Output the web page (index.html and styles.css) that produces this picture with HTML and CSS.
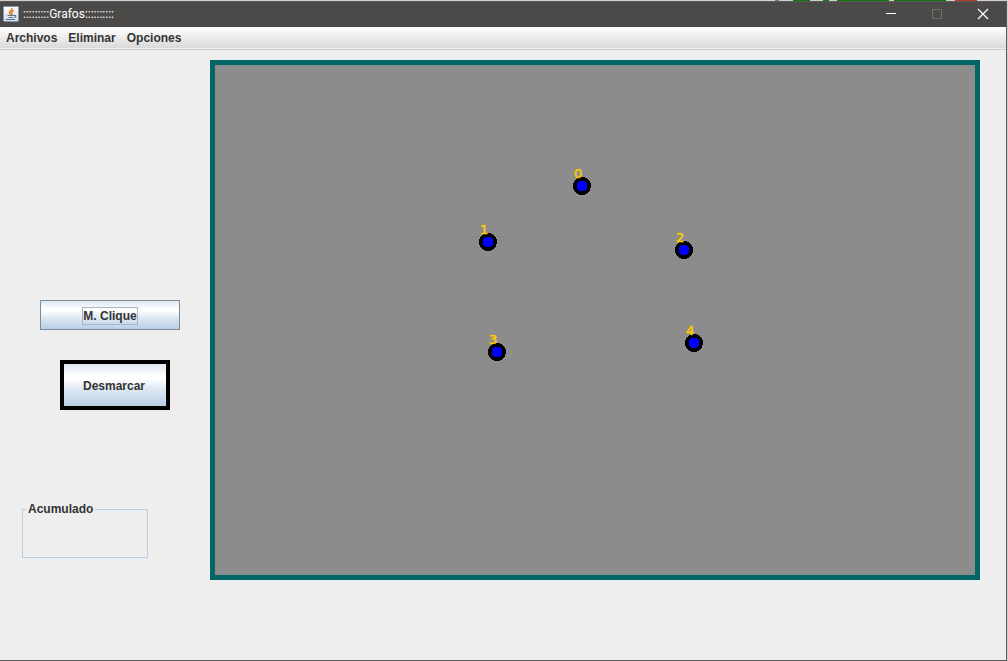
FILE: index.html
```html
<!DOCTYPE html>
<html lang="es">
<head>
<meta charset="utf-8">
<title>Grafos</title>
<link rel="stylesheet" href="styles.css">
</head>
<body>
<div class="desktop" aria-hidden="true">
  <i class="speck gray"></i><i class="speck green"></i><i class="speck green small"></i><i class="speck green long"></i><i class="speck green long"></i><i class="speck red"></i>
</div>
<div class="window">
  <header class="titlebar">
    <svg class="app-icon" viewBox="0 0 16 16" aria-hidden="true">
      <defs><linearGradient id="paper" x1="0" y1="0" x2="0" y2="1"><stop offset="0" stop-color="#fff"/><stop offset="1" stop-color="#cfd8e0"/></linearGradient></defs>
      <rect x=".5" y=".5" width="15" height="15" rx="1" fill="url(#paper)" stroke="#8299b3"/>
      <path d="M9 2C10 4 5.500 5 6.500 7L8 9M11 4.500C8 5.500 8 6.500 9 7.500L8.500 9" fill="none" stroke="#e8811c" stroke-width="1.500"/>
      <path d="M4.500 9.500H11M11 9.500C13.500 9 13.500 11 11 11.500M5.500 11.500H10M3 13.500H12" fill="none" stroke="#4e7896" stroke-width="1.100"/>
    </svg>
    <span class="title">:::::::::Grafos::::::::::</span>
    <div class="controls">
      <button class="control" aria-label="Minimizar"><svg viewBox="0 0 10 10"><path d="M0 4.500H10" stroke="#fff" fill="none"/></svg></button>
      <button class="control" aria-label="Maximizar" disabled><svg viewBox="0 0 10 10"><rect x=".5" y=".5" width="9" height="9" stroke="#716f6c" fill="none"/></svg></button>
      <button class="control" aria-label="Cerrar"><svg viewBox="0 0 10 10"><path d="M0 0L10 10M10 0L0 10" stroke="#fff" stroke-width="1.200" fill="none"/></svg></button>
    </div>
  </header>
  <nav class="menubar">
    <button class="menu">Archivos</button>
    <button class="menu">Eliminar</button>
    <button class="menu">Opciones</button>
  </nav>
  <main class="content">
    <aside class="sidebar">
      <button class="button clique"><span class="focus">M. Clique</span></button>
      <button class="button desmarcar">Desmarcar</button>
      <fieldset class="acumulado"><legend>Acumulado</legend></fieldset>
    </aside>
    <section class="graph" aria-label="Grafo">
      <svg class="plane">
        <defs><g id="node"><circle r="9" fill="#000"/><circle r="5.500" fill="#00f"/></g></defs>
        <g shape-rendering="crispEdges">
          <use href="#node" x="367" y="121"/>
          <use href="#node" x="273" y="177"/>
          <use href="#node" x="469" y="185"/>
          <use href="#node" x="282" y="287"/>
          <use href="#node" x="479" y="278"/>
        </g>
        <g class="numbers">
          <text x="359" y="113">0</text>
          <text x="265" y="169">1</text>
          <text x="461" y="177">2</text>
          <text x="274" y="279">3</text>
          <text x="471" y="270">4</text>
        </g>
      </svg>
    </section>
  </main>
</div>
</body>
</html>
```
FILE: styles.css
```css
* { box-sizing: border-box; }

body {
  margin: 0;
  min-height: 100vh;
  display: flex;
  flex-direction: column;
  padding-right: 1px;
  background: #d0d0d0;
  color: #333;
  font: bold 12px/16px "Liberation Sans", Arial, sans-serif;
}

button {
  margin: 0;
  padding: 0;
  border: 0;
  background: none;
  color: inherit;
  font: inherit;
}

.desktop {
  height: 1px;
  display: flex;
  justify-content: flex-end;
  gap: 5px;
  padding-right: 30px;
}

.speck { width: 17px; height: 1px; }
.gray { width: 4px; background: #68768c; margin-right: 9px; }
.green { background: #0b780b; }
.small { width: 6px; margin: 0 3px 0 8px; }
.long { width: 52px; }
.red { width: 22px; background: #b83a32; margin-left: 4px; }

.window {
  flex: 1;
  display: flex;
  flex-direction: column;
  border: solid #5a5a5a;
  border-width: 0 1px 1px 0;
  background: #eee;
}

.titlebar {
  height: 26px;
  display: flex;
  align-items: center;
  padding: 0 0 2px 3px;
  background: #4c4a48;
  border-top: 1px solid #5a5a58;
  color: #fff;
}

.app-icon { width: 16px; height: 16px; }

.title {
  margin-left: 4px;
  font: 12px/16px Roboto, "Noto Sans", sans-serif;
}

.controls { display: flex; margin-left: auto; }

.control {
  width: 46px;
  height: 23px;
  display: flex;
  align-items: center;
  justify-content: center;
}

.control svg { width: 10px; height: 10px; display: block; overflow: visible; }

.menubar {
  height: 23px;
  display: flex;
  align-items: center;
  gap: 11px;
  padding: 0 6px 2px;
  background: linear-gradient(#fff, #dadada 21px, #eee 21px, #eee 22px, #ccc 22px);
}

.content {
  flex: 1;
  display: flex;
  align-items: flex-start;
  padding: 10px 26px 80px 0;
}

.sidebar {
  width: 210px;
  flex: none;
  display: flex;
  flex-direction: column;
  align-items: flex-start;
  padding-top: 240px;
}

.button {
  display: flex;
  align-items: center;
  justify-content: center;
  background: linear-gradient(#dde8f3, #fff 30%, #fff 35%, #dde8f3 60%, #b8cfe5);
}

.clique {
  width: 140px;
  height: 30px;
  margin-left: 40px;
  padding-top: 1px;
  border: 1px solid #7a8a99;
}

.focus { border: 1px solid #a3b8cc; }

.desmarcar {
  width: 110px;
  height: 50px;
  margin: 30px 0 0 60px;
  padding: 2px 2px 0 0;
  border: 4px solid #000;
}

.acumulado {
  width: 126px;
  height: 57px;
  margin: 91px 0 0 22px;
  padding: 0;
  border: 1px solid #b8cfe5;
}

.acumulado legend { margin-left: 3px; padding: 0 2px; }

.graph {
  flex: 1;
  height: 520px;
  border: 5px solid #006666;
  background: #8c8c8c;
}

.plane {
  display: block;
  width: 100%;
  height: 100%;
  font: 13px "DejaVu Sans", sans-serif;
}

.numbers {
  fill: #ffc800;
  stroke: #ffc800;
  stroke-width: 0.5;
}
```
